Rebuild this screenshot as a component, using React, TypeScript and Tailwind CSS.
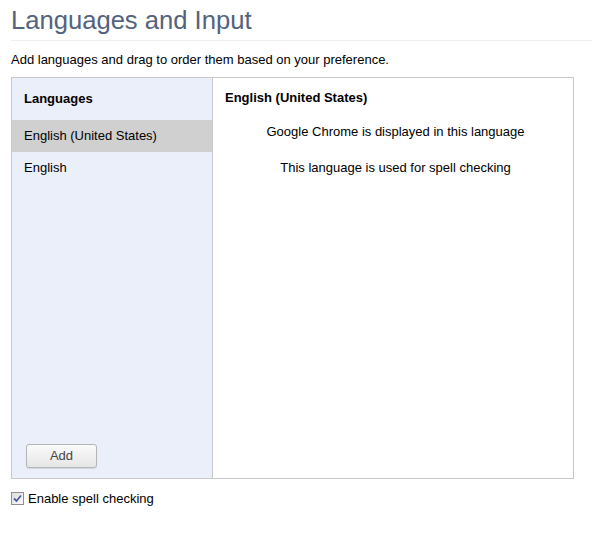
import React, { useState } from 'react';

const languages = ['English (United States)', 'English'];

export default function App() {
  const [selected, setSelected] = useState(0);
  const [spellCheck, setSpellCheck] = useState(true);

  return (
    <div className="w-[592px] h-[546px] bg-white text-[13px] text-black" style={{ fontFamily: '"Liberation Sans", Arial, sans-serif' }}>
      <div className="pl-[11px]">
        <h1 className="text-[25.6px] leading-[30px] pt-[5px] pb-[5px] text-[#53637d] border-b border-[#eeeeee]">
          Languages and Input
        </h1>
        <p className="mt-[11px] leading-[16px]">Add languages and drag to order them based on your preference.</p>

        <div className="mt-[9px] flex w-[563px] h-[402px] border border-[#c8c8c8]">
          <div className="w-[201px] flex flex-col bg-[#ebeff9] border-r border-[#c8c8c8]">
            <div className="h-[42px] flex items-center pl-[12px] font-bold">Languages</div>
            {languages.map((lang, i) => (
              <div
                key={lang}
                onClick={() => setSelected(i)}
                className={`h-[32px] flex items-center pl-[12px] ${selected === i ? 'bg-[#d0d0d0]' : ''}`}
              >
                {lang}
              </div>
            ))}
            <div className="mt-auto pl-[14px] pb-[10px]">
              <button className="w-[71px] h-[24px] rounded-[3px] border border-[#b5b5b5] bg-gradient-to-b from-[#fafafa] to-[#e6e6e6] shadow-[0_1px_1px_rgba(0,0,0,0.1)] text-[#444]">
                Add
              </button>
            </div>
          </div>
          <div className="flex-1 flex flex-col">
            <div className="h-[40px] flex items-center pl-[12px] font-bold">{languages[selected]}</div>
            <div className="text-center mt-[6px] pl-[5px] leading-[16px]">Google Chrome is displayed in this language</div>
            <div className="text-center mt-[20px] pl-[5px] leading-[16px]">This language is used for spell checking</div>
          </div>
        </div>

        <label className="mt-[10px] flex items-center gap-[4px] cursor-pointer select-none" onClick={() => setSpellCheck(!spellCheck)}>
          <span className="w-[13px] h-[13px] border border-[#8f8f8f] bg-gradient-to-br from-[#dcdcdc] to-[#fbfbfb] flex items-center justify-center">
            {spellCheck && (
              <svg width="9" height="9" viewBox="0 0 9 9">
                <path d="M1 4.5 L3.5 7 L8 1.5" fill="none" stroke="#4a5c9a" strokeWidth="1.8" />
              </svg>
            )}
          </span>
          <span>Enable spell checking</span>
        </label>
      </div>
    </div>
  );
}
